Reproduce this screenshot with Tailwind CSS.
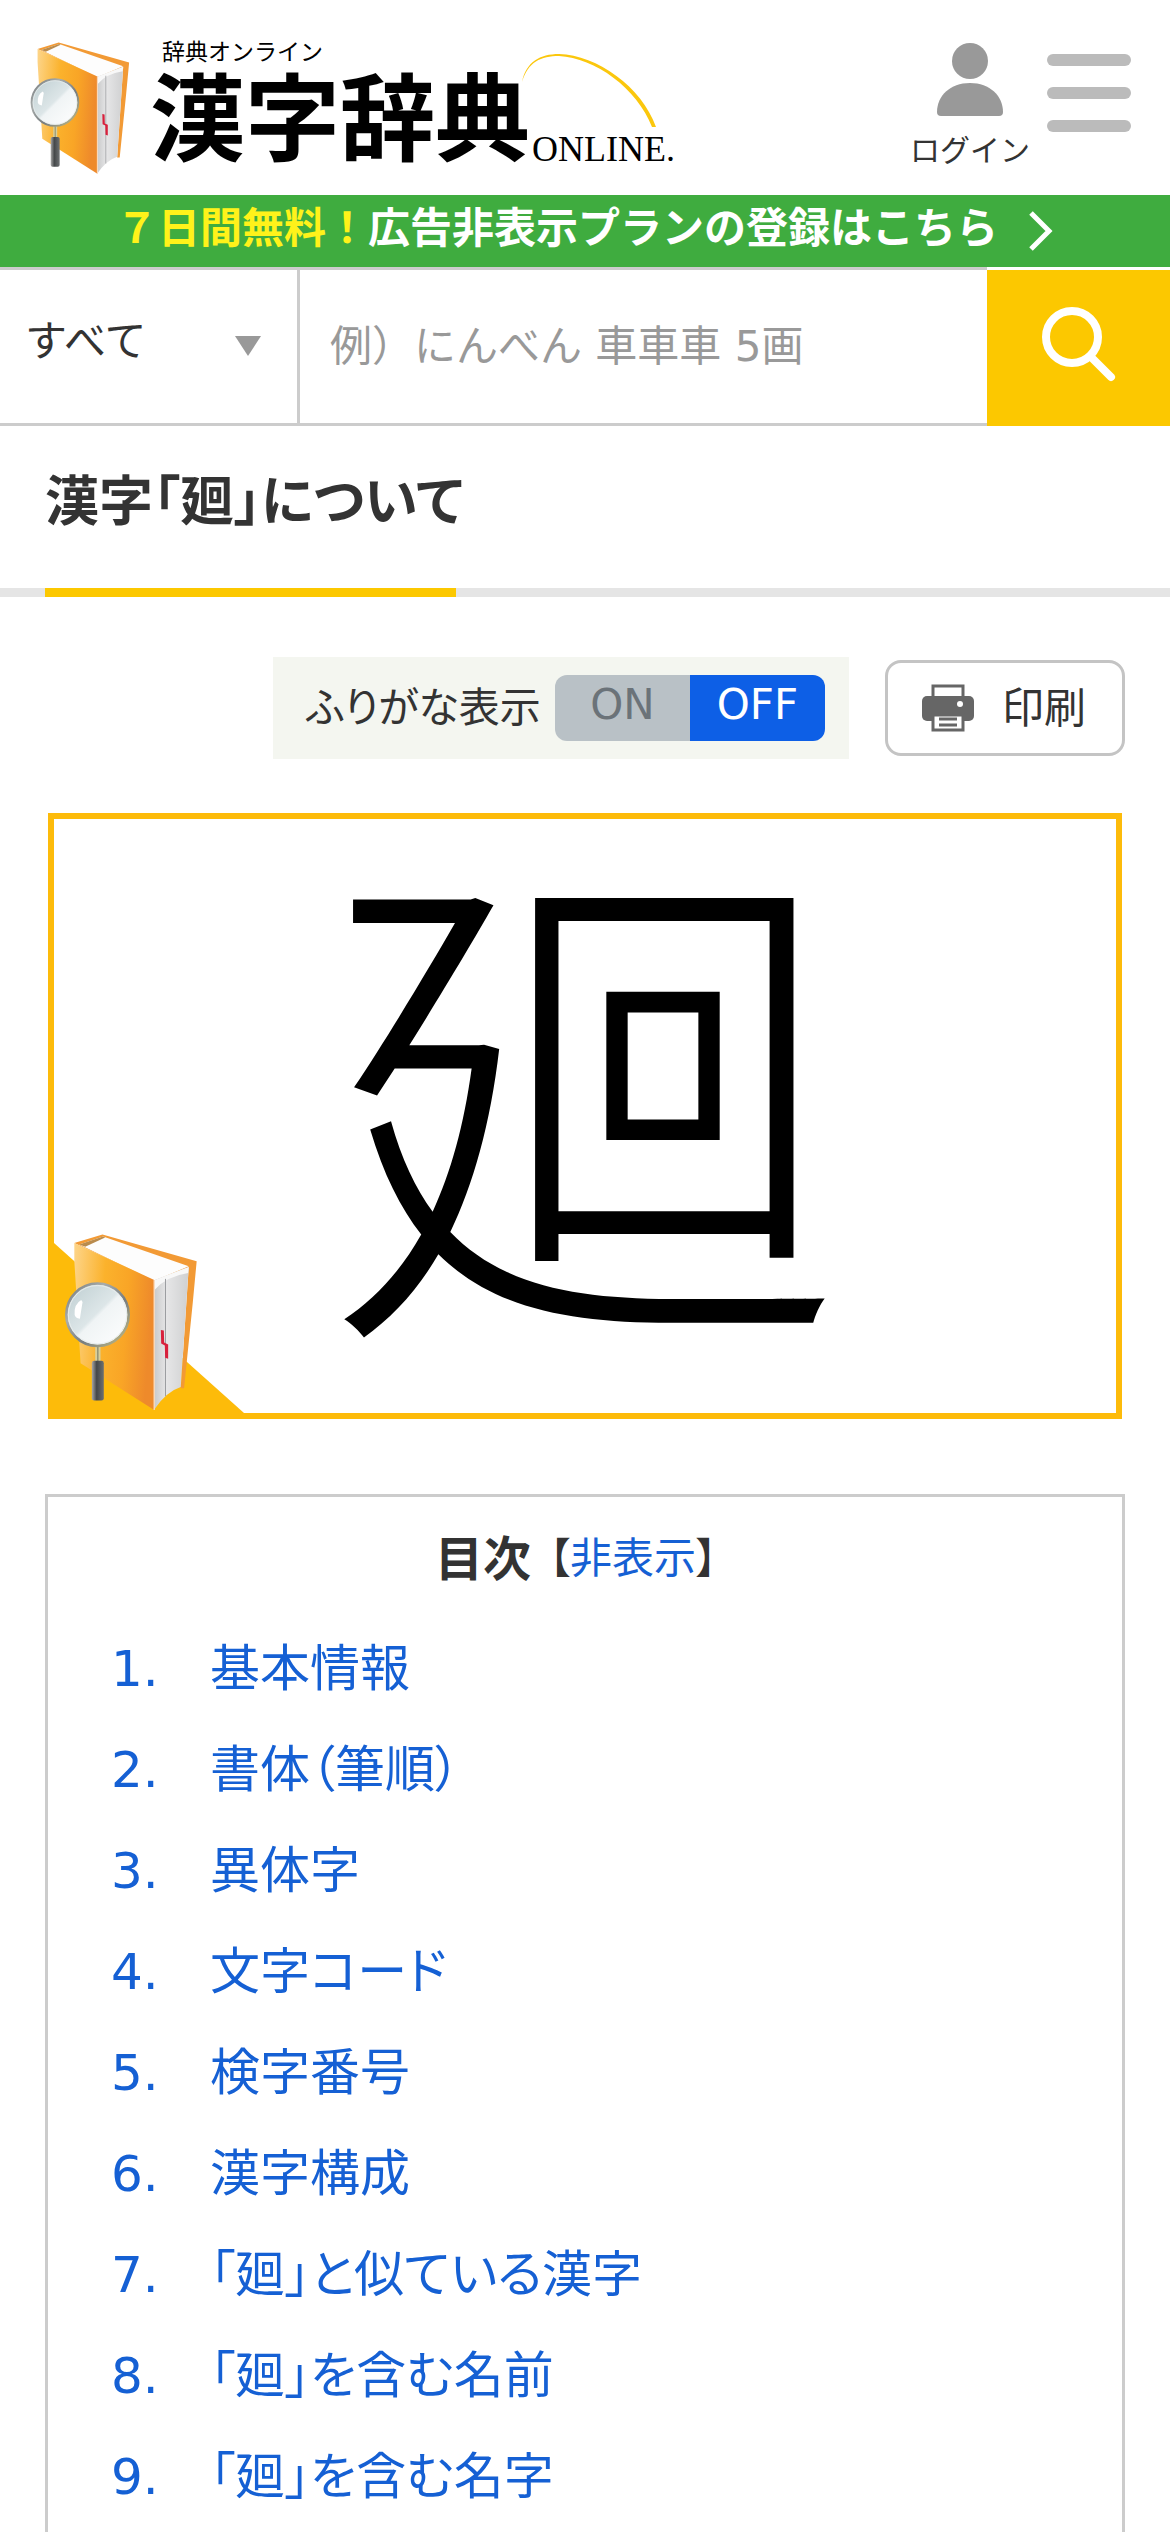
<!DOCTYPE html>
<html lang="ja">
  <head>
    <meta charset="UTF-8" />
    <meta name="viewport" content="width=device-width, initial-scale=1.0" />
    <title>漢字「廻」について - 漢字辞典ONLINE</title>
    <script src="https://cdn.jsdelivr.net/npm/@tailwindcss/browser@4"></script>
  </head>
  <body class="bg-white text-[#333] font-['DejaVu_Sans','Noto_Sans_CJK_JP',sans-serif]">
    <!-- book icon, used in the logo and in the kanji card -->
    <svg class="absolute w-0 h-0" aria-hidden="true">
      <defs>
        <linearGradient id="cover" x1="0" y1="0" x2="1" y2="0.15">
          <stop offset="0" stop-color="#fdd58a" />
          <stop offset="0.4" stop-color="#fbb22c" />
          <stop offset="0.7" stop-color="#f9a526" />
          <stop offset="1" stop-color="#ee8a2b" />
        </linearGradient>
        <linearGradient id="pages" x1="0" y1="0" x2="1" y2="0">
          <stop offset="0" stop-color="#c9cacb" />
          <stop offset="0.35" stop-color="#e6e6e7" />
          <stop offset="1" stop-color="#cfd0d1" />
        </linearGradient>
        <linearGradient id="lens" x1="0" y1="0" x2="1" y2="1">
          <stop offset="0" stop-color="#bccdd0" />
          <stop offset="0.48" stop-color="#dde6e8" />
          <stop offset="0.52" stop-color="#f0f4f5" />
          <stop offset="1" stop-color="#ffffff" />
        </linearGradient>
        <linearGradient id="ring" x1="0" y1="0" x2="1" y2="1">
          <stop offset="0" stop-color="#6d7377" />
          <stop offset="0.3" stop-color="#a9adac" />
          <stop offset="0.6" stop-color="#777d80" />
          <stop offset="1" stop-color="#c9c184" />
        </linearGradient>
        <linearGradient id="grip" x1="0" y1="0" x2="1" y2="0">
          <stop offset="0" stop-color="#a7a7a7" />
          <stop offset="0.4" stop-color="#444749" />
          <stop offset="1" stop-color="#6d7072" />
        </linearGradient>
      </defs>
      <symbol id="book" viewBox="135 160 398 532">
        <path d="M163 188 248 162 532 243 520 370 494 626 484 626 508 262 404 300Z" fill="#f29a35" />
        <path d="M178 192 250 168 508 258 404 302Z" fill="#fdfdfd" />
        <path d="M178 192 250 168 256 171 196 199Z" fill="#b98b4d" />
        <path d="M404 300 508 260 484 622Q440 636 404 690Z" fill="url(#pages)" />
        <path d="M404 300 508 260 506 278Q440 288 404 330Z" fill="#f8f8f8" />
        <path d="M438 296V650" stroke="#9a9c9f" stroke-width="3" />
        <path d="M163 188 404 299V691L182 550 163 240Z" fill="url(#cover)" />
        <path d="M404 299V691" stroke="#fbdcc0" stroke-width="4" />
        <path d="M424 450 433 452 434 488 446 494V537L437 534 436 497 425 491Z" fill="#d8203c" />
        <path d="M226 496H242V548H226Z" fill="#d9cf9a" />
        <path d="M234 500V546" stroke="#8b8b70" stroke-width="4" />
        <rect x="216" y="543" width="36" height="120" rx="7" fill="url(#grip)" />
        <ellipse cx="233" cy="404" rx="94" ry="94" fill="url(#lens)" stroke="url(#ring)" stroke-width="8" />
        <ellipse cx="233" cy="404" rx="88" ry="88" fill="none" stroke="#e7ecec" stroke-width="3" />
        <path d="M184 360Q162 372 164 404 166 414 180 416 184 390 188 366Z" fill="#fff" />
      </symbol>
    </svg>

    <header>
      <div class="flex justify-between h-[195px] pr-[39px]">
        <a href="#" class="relative flex pl-[30px] pt-[42px] text-black">
          <svg class="w-[100px] h-[132px]" aria-hidden="true"><use href="#book" /></svg>
          <div class="ml-[20px] font-['Liberation_Serif','Noto_Sans_CJK_JP',serif]">
            <p class="pl-[12px] text-[23px] leading-[22px]">辞典オンライン</p>
            <p class="mt-[5px] flex items-end">
              <span class="text-[95px] leading-[106px] font-bold">漢字辞典</span>
              <span class="mb-[8px] pl-[2px] text-[36px] leading-[36px]">ONLINE.</span>
            </p>
          </div>
          <svg class="absolute left-[521px] top-[54px] w-[136px] h-[76px]" viewBox="0 0 136 76" fill="#fbc70d" aria-hidden="true">
            <path d="M1 28C7 8 20 2 38 2 74 4 116 34 131 73L135 73C121 33 76 1 38 0 19 0 5 8 1 28Z" />
          </svg>
        </a>
        <nav class="flex">
          <a href="#" class="flex flex-col items-center pt-[42px] text-[30px]">
            <svg class="w-[68px] h-[74px]" viewBox="0 0 68 74" fill="#999" aria-hidden="true">
              <circle cx="34" cy="19" r="18" />
              <path d="M34 41C54 41 67 54 67 70Q67 74 63 74H5Q1 74 1 70C1 54 14 41 34 41Z" />
            </svg>
            <span class="mt-[13px] leading-[44px]">ログイン</span>
          </a>
          <button type="button" aria-label="メニュー" class="ml-[17px] mt-[54px] flex flex-col gap-[21px] self-start">
            <span class="block w-[84px] h-[12px] rounded-full bg-[#bbb]"></span>
            <span class="block w-[84px] h-[12px] rounded-full bg-[#bbb]"></span>
            <span class="block w-[84px] h-[12px] rounded-full bg-[#bbb]"></span>
          </button>
        </nav>
      </div>

      <a href="#" class="flex justify-center items-center h-[72px] bg-[#3fac3f] pb-[4px] text-[42px] leading-[66px] font-bold text-white">
        <span class="text-[#fff21a]">７日間無料！</span><span>広告非表示プランの登録はこちら</span>
        <svg class="ml-[30px] mt-[4px] w-[26px] h-[40px]" viewBox="0 0 26 40" fill="none" stroke="#fff" stroke-width="5" aria-hidden="true">
          <path d="M3 2 21 20 3 38" />
        </svg>
      </a>

      <form class="flex h-[159px]">
        <div class="relative w-[300px] border-y-3 border-r-3 border-[#ccc]">
          <select aria-label="検索対象" class="appearance-none w-full h-full pl-[25px] pb-[10px] text-[42px] bg-white">
            <option>すべて</option>
          </select>
          <svg class="absolute right-[36px] top-[66px] w-[26px] h-[20px] pointer-events-none" viewBox="0 0 26 20" fill="#999" aria-hidden="true"><path d="M0 0H26L13 20Z" /></svg>
        </div>
        <input type="text" aria-label="検索語" placeholder="例）にんべん 車車車 5画" class="flex-1 min-w-0 pl-[30px] border-y-3 border-[#ccc] text-[42px] placeholder:text-[#999] outline-none" />
        <button type="submit" aria-label="検索" class="mt-[3px] pb-[8px] w-[183px] bg-[#fcc800] flex justify-center items-center">
          <svg class="w-[76px] h-[78px]" viewBox="0 0 76 78" fill="none" stroke="#fff" stroke-width="8" stroke-linecap="round" aria-hidden="true">
            <circle cx="31" cy="32" r="26" />
            <path d="M50 52 70 72" />
          </svg>
        </button>
      </form>
    </header>

    <main>
      <div class="h-[171px] border-b-9 border-[#e5e5e5]">
        <h1 class="relative h-[171px] px-[45px] pt-[30px] text-[54px] leading-[84px] font-bold font-['Noto_Sans_CJK_JP',sans-serif] [font-feature-settings:'palt'] after:absolute after:left-[45px] after:bottom-0 after:w-[411px] after:h-[9px] after:bg-[#fcc800]">漢字「廻」について</h1>
      </div>

      <div class="flex justify-end items-center gap-[36px] mt-[60px] mr-[45px]">
        <fieldset class="flex items-center h-[102px] pl-[33px] pr-[24px] bg-[#f4f6f0]">
          <span class="w-[249px] text-[41px] leading-[60px] whitespace-nowrap [font-feature-settings:'palt']">ふりがな表示</span>
          <div class="relative flex h-[66px] text-[42px] leading-[60px] text-center rounded-xl overflow-hidden">
            <input type="radio" name="ruby" id="rubyOn" class="peer/on absolute opacity-0" />
            <label for="rubyOn" class="w-[135px] bg-[#b9c1c6] text-[#6b7379] peer-checked/on:bg-[#0d5fe6] peer-checked/on:text-white">ON</label>
            <input type="radio" name="ruby" id="rubyOff" class="peer/off absolute opacity-0" checked />
            <label for="rubyOff" class="w-[135px] bg-[#b9c1c6] text-[#6b7379] peer-checked/off:bg-[#0d5fe6] peer-checked/off:text-white">OFF</label>
          </div>
        </fieldset>
        <button type="button" class="flex items-center w-[240px] h-[96px] pl-[34px] gap-[28px] border-3 border-[#c4c4c4] rounded-2xl text-[42px]">
          <svg class="w-[52px] h-[48px]" viewBox="0 0 52 48" aria-hidden="true">
            <path d="M11 2H41V14H11Z" fill="#fff" stroke="#666" stroke-width="3" />
            <rect y="12" width="52" height="25" rx="5" fill="#666" />
            <circle cx="38" cy="20" r="3" fill="#fff" />
            <path d="M11 31H41V46H11Z" fill="#fff" stroke="#666" stroke-width="3" />
            <path d="M17 35H35M17 41H35" stroke="#666" stroke-width="3" />
          </svg>
          印刷
        </button>
      </div>

      <figure class="relative mx-[48px] mt-[54px] h-[606px] border-6 border-[#fdbb0a] flex justify-center items-start">
        <span class="text-[520px] leading-[600px] font-light text-black">廻</span>
        <svg class="absolute left-0 bottom-0 w-[190px] h-[170px]" viewBox="0 0 190 170" fill="#fdbb0a" aria-hidden="true"><path d="M0 0 190 170H0Z" /></svg>
        <svg class="absolute left-[11px] bottom-[2px] w-[132px] h-[178px]" aria-hidden="true"><use href="#book" /></svg>
      </figure>

      <section class="mx-[45px] mt-[75px] px-[63px] pb-[60px] border-3 border-[#ccc] [font-feature-settings:'palt']">
        <div class="flex justify-center items-center gap-[18px] pt-[22px] pr-[18px] leading-[80px]">
          <h2 class="text-[48px] font-bold">目次</h2>
          <p class="text-[42px]">【<a href="#" class="text-[#1560d4]">非表示</a>】</p>
        </div>
        <ol class="mt-[20px] text-[50px] leading-[101px] text-[#1560d4]">
          <li><a href="#" class="flex"><span class="w-[99px]">1.</span>基本情報</a></li>
          <li><a href="#" class="flex"><span class="w-[99px]">2.</span>書体（筆順）</a></li>
          <li><a href="#" class="flex"><span class="w-[99px]">3.</span>異体字</a></li>
          <li><a href="#" class="flex"><span class="w-[99px]">4.</span>文字コード</a></li>
          <li><a href="#" class="flex"><span class="w-[99px]">5.</span>検字番号</a></li>
          <li><a href="#" class="flex"><span class="w-[99px]">6.</span>漢字構成</a></li>
          <li><a href="#" class="flex"><span class="w-[99px]">7.</span>「廻」と似ている漢字</a></li>
          <li><a href="#" class="flex"><span class="w-[99px]">8.</span>「廻」を含む名前</a></li>
          <li><a href="#" class="flex"><span class="w-[99px]">9.</span>「廻」を含む名字</a></li>
        </ol>
      </section>
    </main>
  </body>
</html>
